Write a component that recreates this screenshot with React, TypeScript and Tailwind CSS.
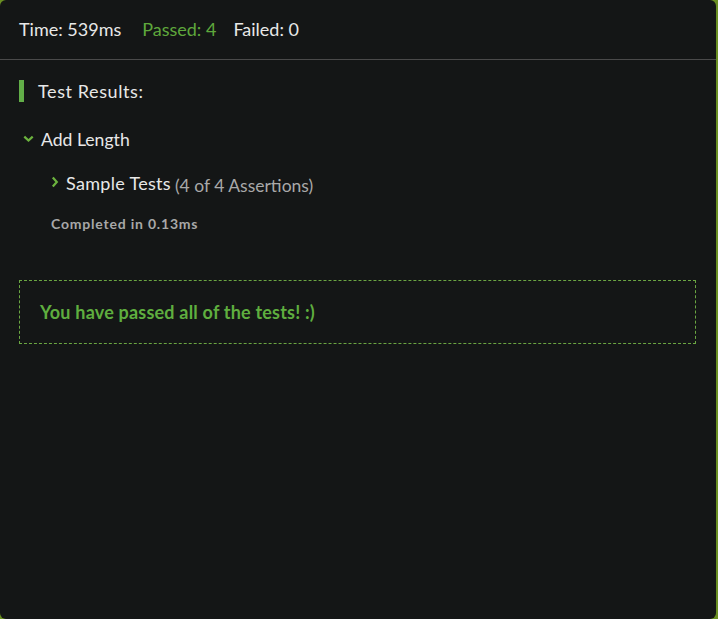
import React from "react";

function ChevronDown() {
  return (
    <svg width="11" height="8" viewBox="0 0 11 8" className="block">
      <path d="M1.3 1.6 L5.5 5.6 L9.7 1.6" fill="none" stroke="#6cb33e" strokeWidth="2.2" />
    </svg>
  );
}

function ChevronRight() {
  return (
    <svg width="8" height="12" viewBox="0 0 8 12" className="block">
      <path d="M1.8 1.5 L5.8 6 L1.8 10.5" fill="none" stroke="#6cb33e" strokeWidth="2.2" />
    </svg>
  );
}

export default function App() {
  return (
    <div className="w-[718px] h-[619px] bg-[#6a8f22] overflow-hidden" style={{ fontFamily: "Lato, 'Noto Sans', sans-serif" }}>
      <div className="w-[716px] h-[619px] bg-[#141616] rounded-[6px] text-[#e8e8e8]">
        <div className="h-[60px] flex items-center pl-[19px] text-[18px] border-b border-[#4a4a4a]">
          <span>Time: 539ms</span>
          <span className="ml-[21px] text-[#5fa83c]">Passed: 4</span>
          <span className="ml-[17px]">Failed: 0</span>
        </div>
        <div className="pl-[19px] pt-[20px]">
          <div className="flex items-center h-[22px]">
            <div className="w-[5px] h-[22px] bg-[#62ae48]" />
            <span className="ml-[14px] text-[18px] tracking-[0.6px]">Test Results:</span>
          </div>
          <div className="flex items-center mt-[27px] h-[22px]">
            <div className="ml-[4px] w-[11px] -mt-[2px]"><ChevronDown /></div>
            <span className="ml-[7px] text-[17.6px]">Add Length</span>
          </div>
          <div className="flex items-baseline mt-[19px] ml-[32px]">
            <div className="w-[8px] self-center -mt-[3px]"><ChevronRight /></div>
            <span className="ml-[7px] text-[18px] tracking-[0.3px]">Sample Tests</span>
            <span className="ml-[4px] text-[17.5px] text-[#a9a9a9] translate-y-[2px]">(4 of 4 Assertions)</span>
          </div>
          <div className="ml-[32px] mt-[16px] text-[14px] font-bold text-[#a8a8a8] tracking-[0.8px]">
            Completed in 0.13ms
          </div>
          <div className="mt-[46px] w-[677px] h-[64px] border border-dashed border-[#6aa642] flex items-center pl-[20px]">
            <span className="text-[18px] font-bold text-[#5fae3f] tracking-[0.2px]">You have passed all of the tests! :)</span>
          </div>
        </div>
      </div>
    </div>
  );
}
